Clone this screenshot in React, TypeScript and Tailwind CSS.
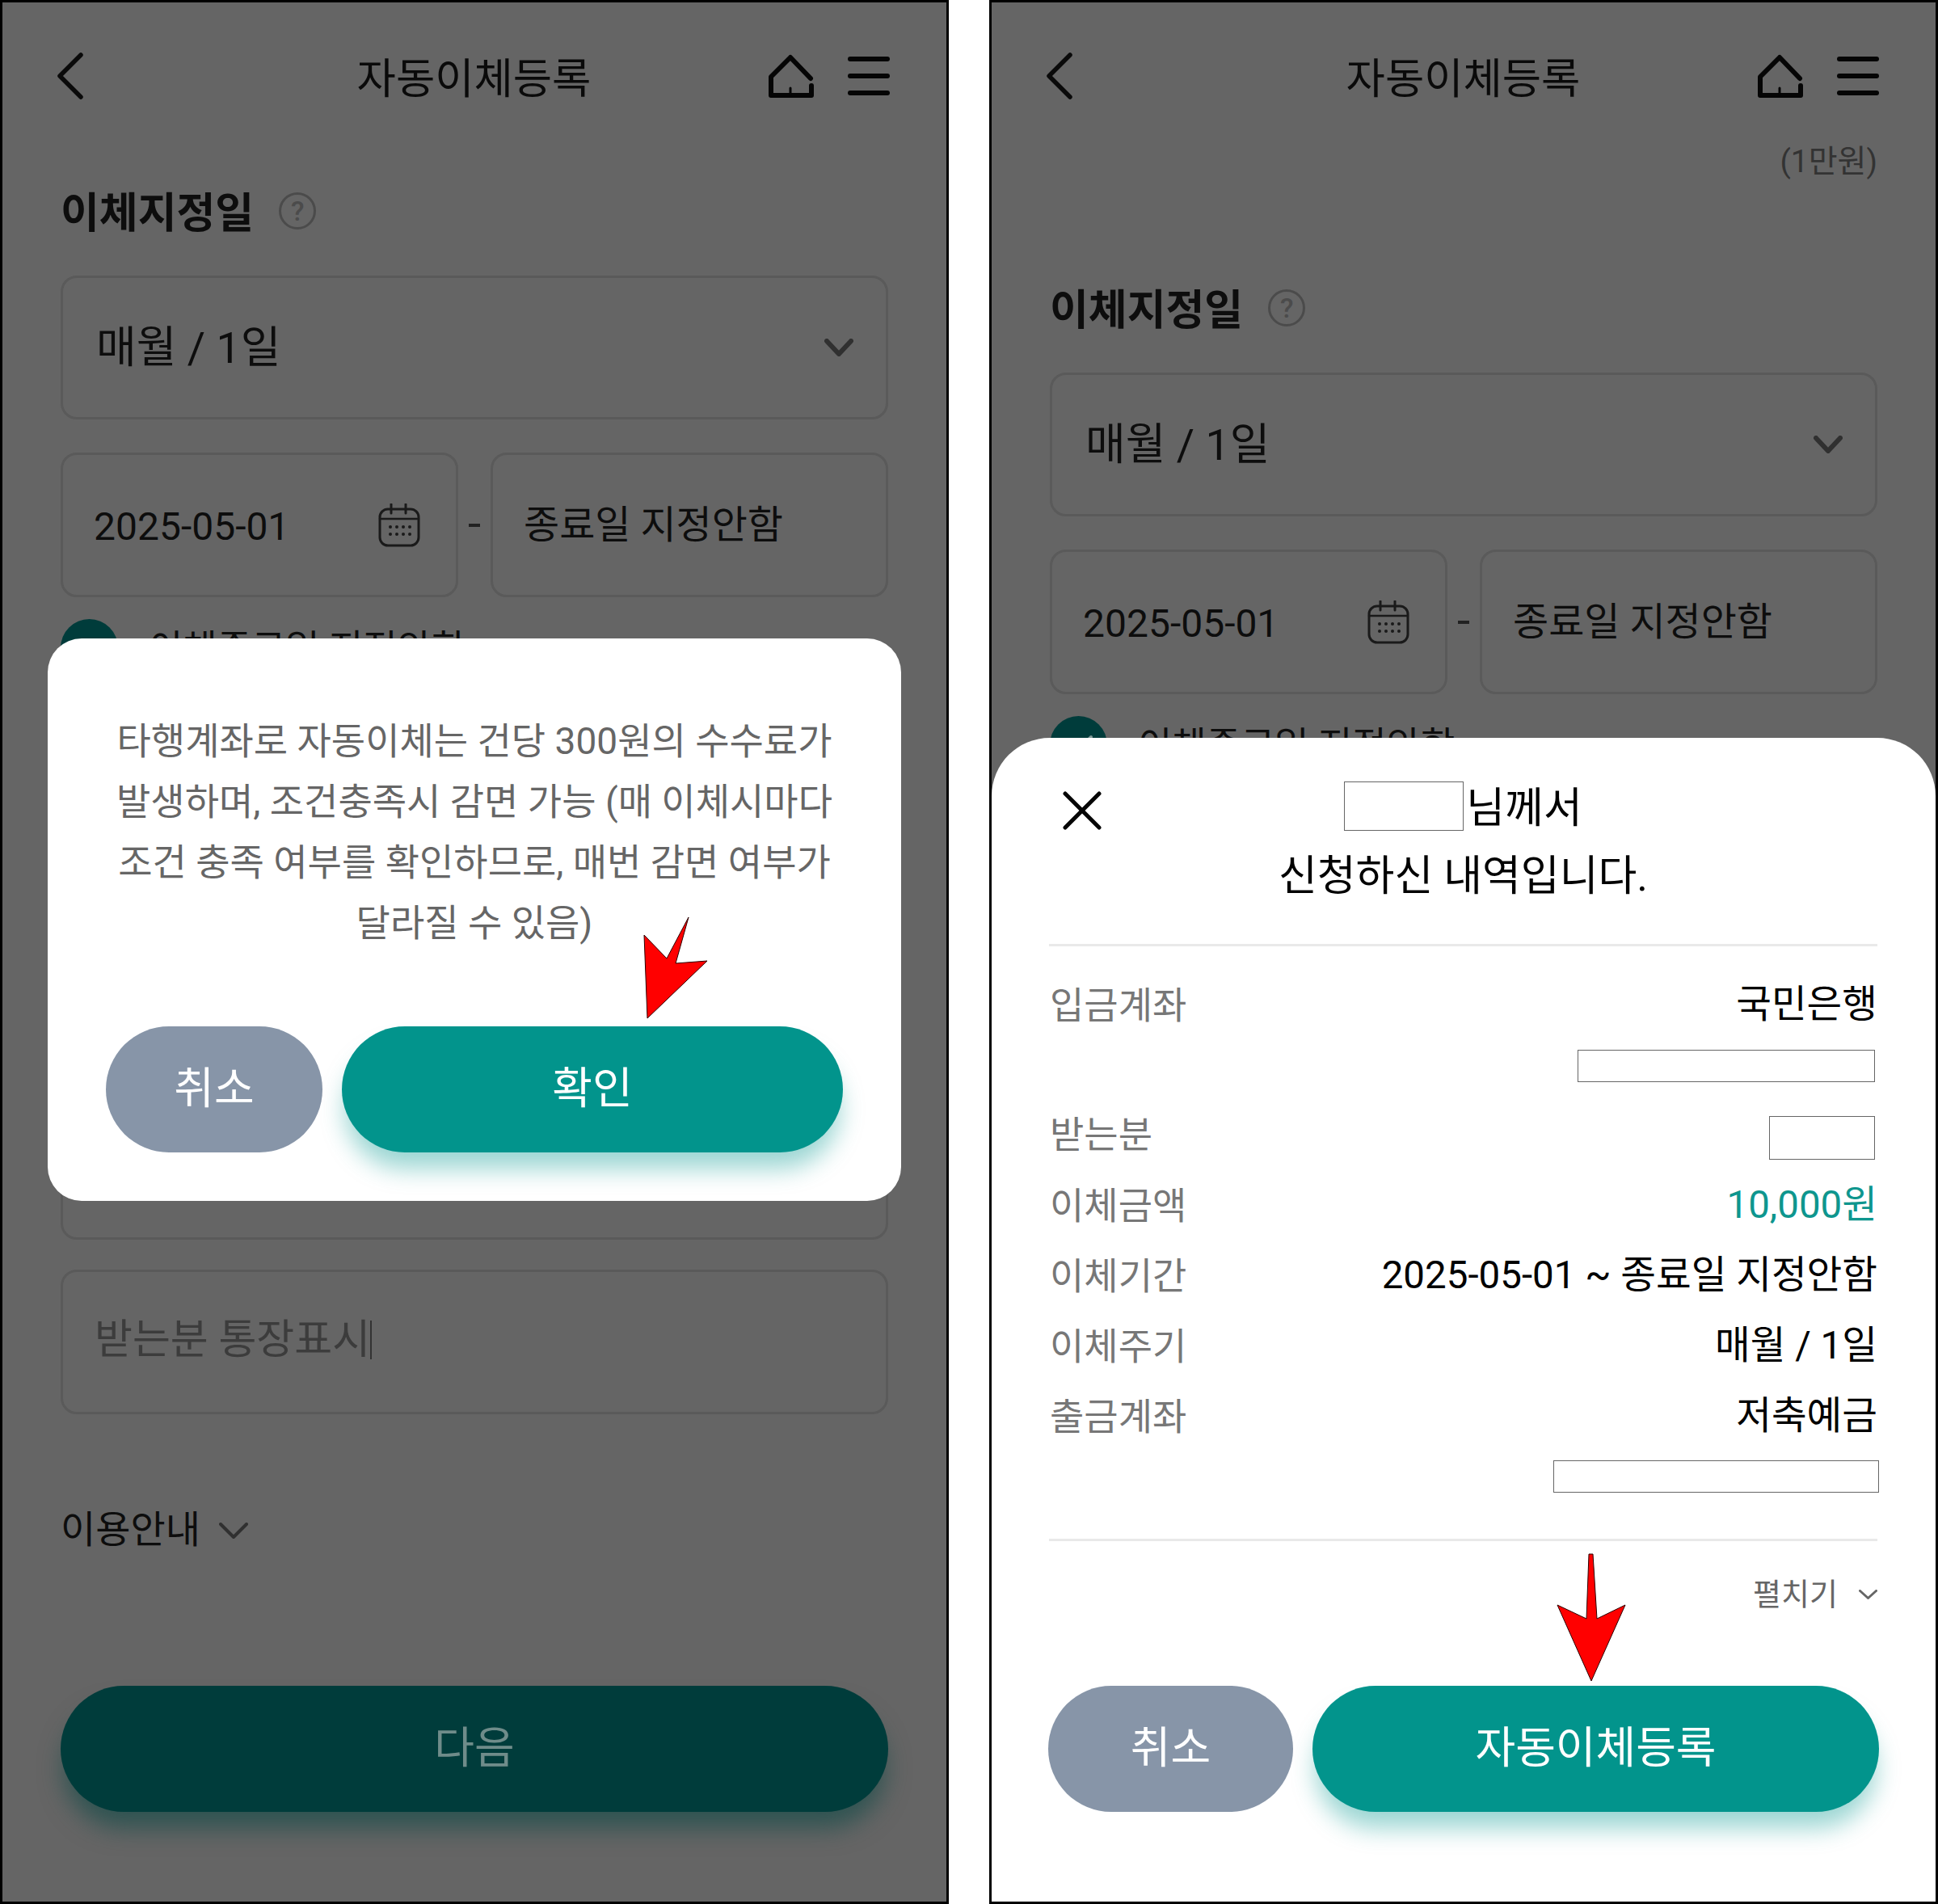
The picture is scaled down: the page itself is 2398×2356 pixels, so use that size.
const fontClass = "font-['Roboto','Noto_Sans_CJK_KR',sans-serif]"

function BackIcon() {
  return (
    <svg width="34" height="58" viewBox="0 0 34 58" fill="none" stroke="#0a0a0a" strokeWidth="5.5" strokeLinecap="round" strokeLinejoin="round">
      <path d="M30 3 L4 29 L30 55" />
    </svg>
  )
}

function HomeIcon() {
  return (
    <svg width="56" height="54" viewBox="0 0 56 54" fill="none" stroke="#050505" strokeLinecap="round" strokeLinejoin="round">
      <path d="M52 30 L27 4 L3 28 V51 H53 V39" strokeWidth="6" />
      <path d="M27 42 V50" strokeWidth="3" />
    </svg>
  )
}

function MenuIcon() {
  return (
    <div className="flex flex-col gap-[15px] w-[52px]">
      <div className="h-[6px] rounded-full bg-[#050505]" />
      <div className="h-[6px] rounded-full bg-[#050505]" />
      <div className="h-[6px] rounded-full bg-[#050505]" />
    </div>
  )
}

function CalendarIcon() {
  return (
    <svg width="52" height="54" viewBox="0 0 52 54" fill="none" stroke="#1a1a1a" strokeLinecap="round">
      <rect x="2" y="7" width="48" height="45" rx="10" strokeWidth="3" />
      <path d="M2 19 H50" strokeWidth="2.5" />
      <path d="M16 1 V12 M34 1 V12" strokeWidth="3" />
      <g fill="#1a1a1a" stroke="none">
        <circle cx="15" cy="29" r="2" /><circle cx="23" cy="29" r="2" /><circle cx="31" cy="29" r="2" /><circle cx="39" cy="29" r="2" />
        <circle cx="15" cy="38" r="2" /><circle cx="23" cy="38" r="2" /><circle cx="31" cy="38" r="2" /><circle cx="39" cy="38" r="2" />
      </g>
    </svg>
  )
}

function Chevron({ width, height, stroke, weight }: { width: number; height: number; stroke: string; weight: number }) {
  return (
    <svg width={width} height={height} viewBox={`0 0 ${width} ${height}`} fill="none" stroke={stroke} strokeWidth={weight} strokeLinecap="round" strokeLinejoin="round">
      <path d={`M${weight / 2} ${weight / 2} L${width / 2} ${height - weight / 2} L${width - weight / 2} ${weight / 2}`} />
    </svg>
  )
}

function Box({ children, className }: { children?: React.ReactNode; className: string }) {
  return <div className={`flex items-center rounded-[20px] border-[3px] border-[#5a5a5a] ${className}`}>{children}</div>
}

function Header() {
  return (
    <div className="flex items-center h-[56px] mt-[63px] -ml-[5px] -mr-[4px]">
      <div className="w-[220px]">
        <BackIcon />
      </div>
      <div className="flex-1 text-center text-[52.5px] leading-none text-[#0a0a0a] pt-[8px]">자동이체등록</div>
      <div className="w-[220px] flex items-center justify-end gap-[42px] pr-[2px]">
        <HomeIcon />
        <MenuIcon />
      </div>
    </div>
  )
}

function TransferForm() {
  return (
    <>
      <div className="flex items-center h-[60px]">
        <span className="text-[52px] leading-none font-bold text-[#0d0d0d] pt-[3px]">이체지정일</span>
        <span className="ml-[31px] -mt-[4px] flex items-center justify-center w-[46px] h-[46px] rounded-full border-[3px] border-[#4b4b4b] text-[34px] font-medium leading-none text-[#4b4b4b]">?</span>
      </div>
      <Box className="mt-[48px] h-[178px] pl-[41px] pr-[40px] justify-between">
        <span className="text-[54px] leading-none text-[#0d0d0d] pt-[2px]">매월 / 1일</span>
        <Chevron width={36} height={22} stroke="#303030" weight={6} />
      </Box>
      <div className="flex items-center mt-[41px]">
        <Box className="w-[492px] h-[179px] pl-[38px] pr-[44px] justify-between">
          <span className="text-[48px] leading-none text-[#0d0d0d] pt-[4px]">2025-05-01</span>
          <CalendarIcon />
        </Box>
        <div className="flex-1 flex justify-center">
          <div className="w-[14px] h-[4px] bg-[#222]" />
        </div>
        <Box className="w-[492px] h-[179px] pl-[38px]">
          <span className="text-[48px] leading-none text-[#0d0d0d]">종료일 지정안함</span>
        </Box>
      </div>
      <div className="flex items-center gap-[38px] mt-[27px]">
        <div className="flex items-center justify-center w-[71px] h-[71px] rounded-full bg-[#003c3b]">
          <svg width="36" height="28" viewBox="0 0 36 28" fill="none" stroke="#7f9a98" strokeWidth="4" strokeLinecap="round" strokeLinejoin="round">
            <path d="M3 14 L13 24 L33 4" />
          </svg>
        </div>
        <span className="text-[46px] leading-none text-[#0d0d0d]">이체종료일 지정안함</span>
      </div>
    </>
  )
}

function RedArrow({ points, width, height, className }: { points: string; width: number; height: number; className: string }) {
  return (
    <svg className={`absolute ${className}`} width={width} height={height} viewBox={`0 0 ${width} ${height}`}>
      <polygon points={points} fill="#ff0000" stroke="#2a0000" strokeWidth="1" strokeLinejoin="round" />
    </svg>
  )
}

function Redacted({ className }: { className: string }) {
  return <div className={`bg-white border border-[#666] ${className}`} />
}

function AlertDialog() {
  const lines = [
    '타행계좌로 자동이체는 건당 300원의 수수료가',
    '발생하며, 조건충족시 감면 가능 (매 이체시마다',
    '조건 충족 여부를 확인하므로, 매번 감면 여부가',
    '달라질 수 있음)',
  ]
  return (
    <div className="absolute left-[56px] top-[787px] w-[1056px] rounded-[42px] bg-white pt-[90px] pb-[60px] px-[72px]">
      <div className="text-center text-[46px] leading-[75px] text-[#666] whitespace-nowrap">
        {lines.map((line) => (
          <div key={line}>{line}</div>
        ))}
      </div>
      <div className="flex gap-[24px] mt-[90px]">
        <button className="w-[268px] h-[156px] rounded-full bg-[#8795a8] text-white text-[54px] leading-none">취소</button>
        <button className="flex-1 h-[156px] rounded-full bg-[#02948c] text-white text-[54px] leading-none shadow-[0_24px_30px_-4px_rgba(3,150,142,0.4)]">확인</button>
      </div>
    </div>
  )
}

function SummaryRow({ label, value, valueClass, children }: { label: string; value?: string; valueClass?: string; children?: React.ReactNode }) {
  return (
    <div className="flex justify-between items-start">
      <div className="h-[46px] flex items-center text-[46px] leading-none text-[#777] pl-[1px]">{label}</div>
      <div className="flex flex-col items-end">
        {value && <div className={`h-[46px] flex items-center text-[47.5px] leading-none ${valueClass ?? 'text-black'}`}>{value}</div>}
        {children}
      </div>
    </div>
  )
}

function SummarySheet() {
  return (
    <div className="absolute left-0 right-0 bottom-0 top-[910px] rounded-t-[72px] bg-white pl-[71px] pr-[72px] pt-[54px]">
      <svg className="absolute left-[88px] top-[66px]" width="48" height="48" viewBox="0 0 48 48" fill="none" stroke="#050505" strokeWidth="5" strokeLinecap="round">
        <path d="M3 3 L45 45 M45 3 L3 45" />
      </svg>
      <div className="flex items-center justify-center h-[61px]">
        <Redacted className="w-[148px] h-[61px]" />
        <span className="ml-[3px] text-[52px] leading-none text-black pt-[6px]">님께서</span>
      </div>
      <div className="mt-[27px] h-[54px] flex items-center justify-center text-[52px] leading-none text-black pt-[6px]">신청하신 내역입니다.</div>
      <div className="mt-[59px] h-[3px] bg-[#e9e9e9]" />
      <div className="flex flex-col gap-[41px] mt-[50px]">
        <SummaryRow label="입금계좌" value="국민은행">
          <Redacted className="mt-[32px] mb-[1px] mr-[3px] w-[368px] h-[40px]" />
        </SummaryRow>
        <SummaryRow label="받는분">
          <div className="h-[47px]">
            <Redacted className="mr-[3px] w-[131px] h-[54px]" />
          </div>
        </SummaryRow>
        <SummaryRow label="이체금액" value="10,000원" valueClass="text-[#0e968e]" />
        <SummaryRow label="이체기간" value="2025-05-01 ~ 종료일 지정안함" />
        <SummaryRow label="이체주기" value="매월 / 1일" />
        <SummaryRow label="출금계좌" value="저축예금">
          <Redacted className="mt-[31px] -mr-[2px] w-[403px] h-[40px]" />
        </SummaryRow>
      </div>
      <div className="mt-[57px] h-[3px] bg-[#e9e9e9]" />
      <div className="flex items-center justify-end gap-[26px] mt-[48px] h-[36px] text-[38px] leading-none text-[#666]">
        <span>펼치기</span>
        <Chevron width={23} height={12} stroke="#666" weight={3} />
      </div>
      <div className="flex gap-[24px] mt-[95px] -ml-[1px] -mr-[2px]">
        <button className="w-[303px] h-[156px] rounded-full bg-[#8795a8] text-white text-[54px] leading-none">취소</button>
        <button className="flex-1 h-[156px] rounded-full bg-[#02948c] text-white text-[54px] leading-none shadow-[0_24px_30px_-4px_rgba(3,150,142,0.4)]">자동이체등록</button>
      </div>
    </div>
  )
}

export default function App() {
  return (
    <div className={`flex justify-between w-[2398px] h-[2356px] bg-white ${fontClass}`}>
      {/* 왼쪽: 수수료 안내 팝업 */}
      <div className="relative w-[1174px] h-[2356px] overflow-hidden border-[3px] border-black bg-[#656565] px-[72px]">
        <Header />
        <div className="mt-[111px]">
          <TransferForm />
        </div>
        <Box className="mt-[519px] h-[178px]" />
        <Box className="mt-[37px] h-[179px] pl-[39px] pb-[6px]">
          <span className="text-[51px] leading-none text-[#3c3c3c]">받는분 통장표시</span>
          <div className="w-[2px] h-[48px] bg-[#333]" />
        </Box>
        <div className="flex items-center gap-[23px] mt-[121px] h-[42px]">
          <span className="text-[47px] leading-none text-[#0d0d0d]">이용안내</span>
          <div className="mt-[4px]">
            <Chevron width={36} height={20} stroke="#303030" weight={4} />
          </div>
        </div>
        <button className="w-full h-[156px] mt-[173px] rounded-full bg-[#003c3b] text-[#6f8c8a] text-[54px] leading-none shadow-[0_24px_30px_-4px_rgba(0,70,66,0.55)]">다음</button>
        <AlertDialog />
        <RedArrow className="left-[793px] top-[1131px]" width={80} height={127} points="5,126 1,23 29,52 56,1 40,58 79,55" />
      </div>

      {/* 오른쪽: 신청 내역 확인 시트 */}
      <div className="relative w-[1174px] h-[2356px] overflow-hidden border-[3px] border-black bg-[#656565] px-[72px]">
        <Header />
        <div className="mt-[57px] h-[42px] flex items-center justify-end text-[39px] leading-none text-[#333]">(1만원)</div>
        <div className="mt-[132px]">
          <TransferForm />
        </div>
        <SummarySheet />
        <RedArrow className="left-[699px] top-[1919px]" width={86} height={160} points="43,158 1,64 37,81 40,1 45,1 50,81 85,64" />
      </div>
    </div>
  )
}
